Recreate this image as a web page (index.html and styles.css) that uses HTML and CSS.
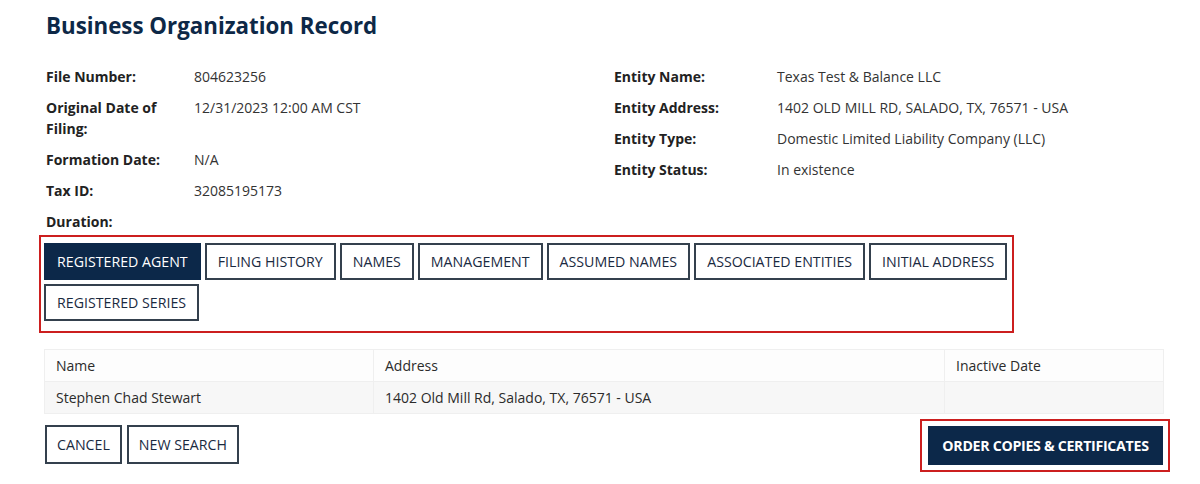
FILE: index.html
```html
<!DOCTYPE html>
<html lang="en">
<head>
<meta charset="utf-8">
<title>Business Organization Record</title>
<link rel="stylesheet" href="styles.css">
</head>
<body>
<main class="page">
  <h1 class="title">Business Organization Record</h1>

  <section class="info">
    <dl class="info-col info-left">
      <dt>File Number:</dt><dd>804623256</dd>
      <dt>Original Date of Filing:</dt><dd>12/31/2023 12:00 AM CST</dd>
      <dt>Formation Date:</dt><dd>N/A</dd>
      <dt>Tax ID:</dt><dd>32085195173</dd>
      <dt>Duration:</dt><dd></dd>
    </dl>
    <dl class="info-col info-right">
      <dt>Entity Name:</dt><dd>Texas Test &amp; Balance LLC</dd>
      <dt>Entity Address:</dt><dd>1402 OLD MILL RD, SALADO, TX, 76571 - USA</dd>
      <dt>Entity Type:</dt><dd>Domestic Limited Liability Company (LLC)</dd>
      <dt>Entity Status:</dt><dd>In existence</dd>
    </dl>
  </section>

  <nav class="tabs">
    <button class="btn btn-active">REGISTERED AGENT</button>
    <button class="btn">FILING HISTORY</button>
    <button class="btn">NAMES</button>
    <button class="btn">MANAGEMENT</button>
    <button class="btn">ASSUMED NAMES</button>
    <button class="btn">ASSOCIATED ENTITIES</button>
    <button class="btn">INITIAL ADDRESS</button>
    <button class="btn">REGISTERED SERIES</button>
  </nav>

  <table class="grid">
    <thead>
      <tr><th class="c1">Name</th><th class="c2">Address</th><th class="c3">Inactive Date</th></tr>
    </thead>
    <tbody>
      <tr><td>Stephen Chad Stewart</td><td>1402 Old Mill Rd, Salado, TX, 76571 - USA</td><td></td></tr>
    </tbody>
  </table>

  <div class="actions">
    <div class="actions-left">
      <button class="btn btn-tall">CANCEL</button>
      <button class="btn btn-tall">NEW SEARCH</button>
    </div>
    <div class="highlight">
      <button class="btn btn-tall btn-active btn-order">ORDER COPIES &amp; CERTIFICATES</button>
    </div>
  </div>
</main>
</body>
</html>
```

FILE: styles.css
```css
* { box-sizing: border-box; }

html, body {
  margin: 0;
  padding: 0;
  background: #ffffff;
}

body {
  font-family: "Open Sans", "Noto Sans", "Liberation Sans", sans-serif;
  font-size: 14px;
  color: #2b2b2b;
}

.page {
  width: 1126px;
  margin-left: 44px;
  padding-top: 11px;
}

.title {
  margin: 0 0 0 2px;
  font-size: 22.3px;
  line-height: 30px;
  font-weight: 700;
  color: #0d2847;
}

.info {
  display: flex;
  margin-top: 25px;
  padding-left: 2px;
}

.info-col {
  margin: 0;
  display: grid;
  row-gap: 10px;
  align-content: start;
  line-height: 21px;
}

.info-left {
  grid-template-columns: 148px 420px;
}

.info-right {
  grid-template-columns: 163px auto;
}

.info dt {
  font-weight: 700;
  color: #222;
  max-width: 125px;
}

.info-right dt { max-width: 160px; }

.info dd {
  margin: 0;
  color: #333;
  min-height: 21px;
}

.tabs {
  display: flex;
  flex-wrap: wrap;
  gap: 4px 4px;
  width: 975px;
  margin: 3px 0 0 -5px;
  padding: 6px 4px 10px 3px;
  border: 2px solid #cc1f1f;
}

.tabs .btn {
  font-size: 14.2px;
  height: 37px;
}

.btn {
  font-family: "Open Sans", "Noto Sans", "Liberation Sans", sans-serif;
  font-size: 14px;
  line-height: 20px;
  height: 37px;
  padding: 0 11px;
  background: #ffffff;
  color: #1a2a3f;
  border: 2px solid #34404d;
  border-radius: 0;
  cursor: pointer;
  white-space: nowrap;
}

.btn-active {
  background: #0c2849;
  border-color: #0c2849;
  color: #ffffff;
}

.btn-tall {
  height: 39px;
  padding: 0 10px;
  font-size: 14.2px;
}

.btn-order {
  font-weight: 700;
  padding: 0 11px;
  width: 235px;
  letter-spacing: -0.3px;
}

.grid {
  width: 1119px;
  margin-top: 16px;
  border-collapse: collapse;
  table-layout: fixed;
}

.grid .c1 { width: 329px; }
.grid .c2 { width: 571px; }
.grid .c3 { width: 219px; }

.grid th, .grid td {
  text-align: left;
  font-weight: 400;
  padding: 0 11px;
  border: 1px solid #efefef;
  color: #2b2b2b;
}

.grid th {
  height: 32px;
  background: #fdfdfd;
}

.grid td {
  height: 32px;
  background: #f7f7f7;
}

.actions {
  display: flex;
  justify-content: space-between;
  align-items: flex-start;
  margin-top: 5px;
}

.actions-left {
  display: flex;
  gap: 5px;
  margin-top: 6px;
  margin-left: 1px;
}

.highlight {
  padding: 5px 5px 5px 6px;
  border: 2px solid #cc1f1f;
}
```
